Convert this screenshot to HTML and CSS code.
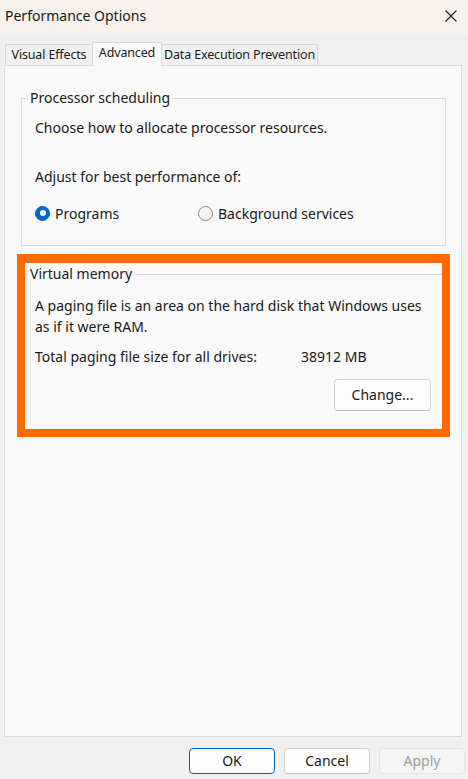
FILE: index.html
```html
<!DOCTYPE html>
<html lang="en">
<head>
<meta charset="utf-8">
<title>Performance Options</title>
<link rel="stylesheet" href="styles.css">
</head>
<body>
<div class="window">
  <div class="titlebar">
    <span class="title">Performance Options</span>
    <span class="close" aria-label="Close">
      <svg width="12" height="12" viewBox="0 0 12 12"><path d="M0.5 0.5 L11.5 11.5 M11.5 0.5 L0.5 11.5" stroke="#1b1b1b" stroke-width="1.1" fill="none"/></svg>
    </span>
  </div>
  <div class="tabs">
    <div class="tab tab-ve">Visual Effects</div>
    <div class="tab tab-adv active">Advanced</div>
    <div class="tab tab-dep">Data Execution Prevention</div>
  </div>
  <div class="panel">
    <fieldset class="group group-proc">
      <legend>Processor scheduling</legend>
      <p class="line first">Choose how to allocate processor resources.</p>
      <p class="line adjust">Adjust for best performance of:</p>
      <div class="radios">
        <label class="radio radio-prog"><span class="dot checked"></span>Programs</label>
        <label class="radio"><span class="dot"></span>Background services</label>
      </div>
    </fieldset>
    <div class="highlight">
      <fieldset class="group group-vm">
        <legend>Virtual memory</legend>
        <p class="para">A paging file is an area on the hard disk that Windows uses as if it were RAM.</p>
        <div class="total"><span class="total-label">Total paging file size for all drives:</span><span>38912 MB</span></div>
        <div class="change-row"><button class="btn change">Change...</button></div>
      </fieldset>
    </div>
  </div>
  <div class="footer">
    <button class="btn ok">OK</button>
    <button class="btn">Cancel</button>
    <button class="btn disabled">Apply</button>
  </div>
</div>
</body>
</html>
```

FILE: styles.css
```css
* { box-sizing: border-box; }
html, body {
  margin: 0;
  padding: 0;
}
body {
  background: #f0f0f0;
  font-family: "Noto Sans", "Open Sans", sans-serif;
  font-size: 14px;
  color: #1a1a1a;
  width: 468px;
  height: 779px;
  overflow: hidden;
}
.window {
  display: flex;
  flex-direction: column;
  height: 779px;
}
.titlebar {
  height: 34px;
  background: #f6f1ec;
  display: flex;
  align-items: center;
  justify-content: space-between;
  padding: 0 11px 3px 5px;
}
.title {
  font-size: 14px;
  color: #1a1a1a;
}
.close {
  display: flex;
  width: 12px;
  height: 12px;
}
.tabs {
  margin-top: 8px;
  height: 23px;
  display: flex;
  align-items: flex-end;
  padding-left: 5px;
  font-size: 12.5px;
  letter-spacing: -0.15px;
}
.tab {
  height: 21px;
  border: 1px solid #d9d9d9;
  border-bottom: none;
  background: #f0f0f0;
  display: flex;
  align-items: center;
  justify-content: center;
  line-height: 1;
  white-space: nowrap;
  padding-top: 1px;
}
.tab + .tab { margin-left: -1px; }
.tab-ve { width: 88px; }
.tab-adv { width: 70px; }
.tab-dep { width: 157px; }
.tab.active {
  height: 24px;
  margin-bottom: -1px;
  background: #f9f9f9;
  position: relative;
  z-index: 1;
  padding-top: 0;
  padding-bottom: 3px;
}
.panel {
  margin: 0 6px 0 4px;
  height: 672px;
  background: #f9f9f9;
  border: 1px solid #dcdcdc;
  padding: 22px 15px 0 16px;
}
.group {
  margin: 0;
  border: 1px solid #dadada;
  padding: 0 0 0 13px;
  min-width: 0;
}
.group legend {
  padding: 0 2px;
  margin-left: -7px;
  line-height: 20px;
  font-size: 14px;
}
.line {
  margin: 0;
  line-height: 20px;
}
.line.first { margin-top: 10px; }
.line.adjust { margin-top: 29px; }
.radios {
  display: flex;
  margin-top: 16px;
  margin-bottom: 22px;
  height: 20px;
  align-items: center;
}
.radio {
  display: flex;
  align-items: center;
  gap: 5px;
}
.radio-prog { width: 163px; }
.dot {
  width: 15px;
  height: 15px;
  border-radius: 50%;
  border: 1px solid #8a8a8a;
  background: #f4f4f4;
  display: inline-block;
  position: relative;
}
.dot.checked {
  background: #0067c0;
  border-color: #0067c0;
}
.dot.checked::after {
  content: "";
  position: absolute;
  left: 3.5px;
  top: 3.5px;
  width: 6px;
  height: 6px;
  border-radius: 50%;
  background: #ffffff;
}
.highlight {
  position: relative;
  margin-top: 18px;
}
.highlight::after {
  content: "";
  position: absolute;
  left: -4px;
  right: -4px;
  top: -10px;
  bottom: -6px;
  border: 8px solid #ff6a00;
  border-top-width: 9px;
  pointer-events: none;
}
.group-vm { padding-right: 14px; }
.para {
  margin: 11px 0 0;
  line-height: 21px;
  padding-right: 4px;
}
.total {
  display: flex;
  margin-top: 10px;
  line-height: 20px;
}
.total-label { width: 266px; }
.change-row {
  display: flex;
  justify-content: flex-end;
  margin-top: 12px;
  margin-bottom: 19px;
}
.btn {
  font-family: inherit;
  font-size: 14px;
  color: #1a1a1a;
  background: #fdfdfd;
  border: 1px solid #d3d3d3;
  border-bottom-color: #bdbdbd;
  border-radius: 4px;
  height: 26px;
  width: 86px;
  padding: 0;
  line-height: 1;
}
.change {
  height: 32px;
  width: 97px;
}
.footer {
  display: flex;
  justify-content: flex-end;
  gap: 9px;
  margin-top: 11px;
  padding-right: 3px;
}
.btn.ok {
  border: 1px solid #0067c0;
}
.btn.disabled {
  background: #f5f5f5;
  border-color: #e5e5e5;
  color: #9d9d9d;
}
```
